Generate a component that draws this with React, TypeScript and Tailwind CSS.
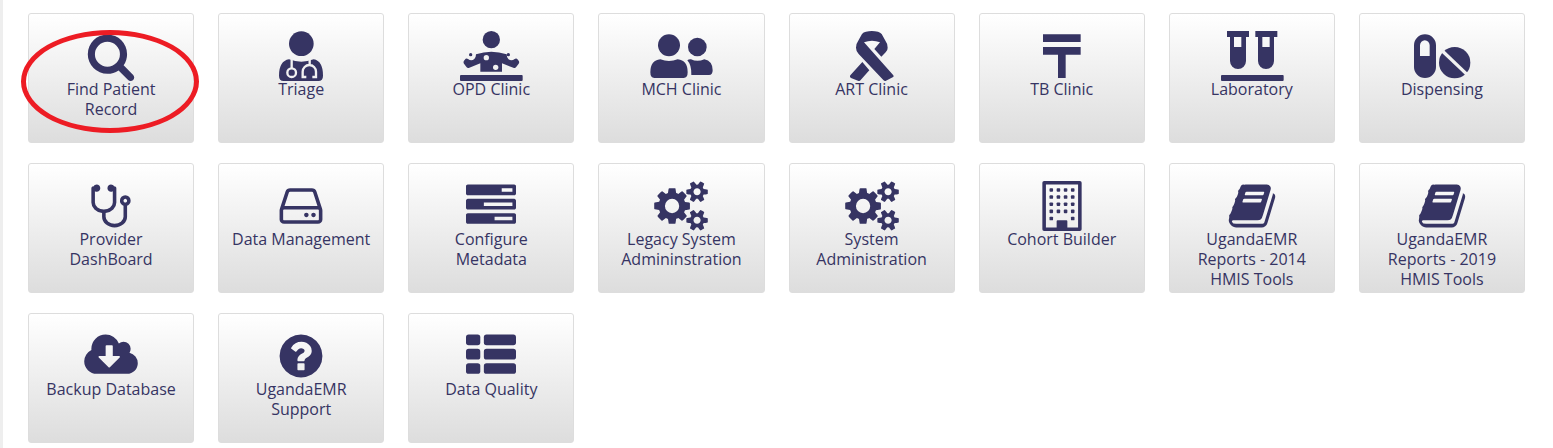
import type { ReactNode } from "react";

const BG = "#f1f1f1";

function Glyph({ d }: { d: string }) {
  return (
    <svg viewBox="-64 0 1920 1792" className="h-[50px] w-[54px] fill-current" aria-hidden="true">
      <path d={d} />
    </svg>
  );
}

function Drawing({ children }: { children: ReactNode }) {
  return (
    <svg viewBox="0 0 192 150" className="h-[50px] w-16 fill-current" aria-hidden="true">
      {children}
    </svg>
  );
}

const SEARCH =
  "M1216 832q0-185-131.500-316.500t-316.500-131.500-316.500 131.500-131.500 316.500 131.500 316.500 316.500 131.500 316.500-131.500 131.500-316.500zm512 832q0 52-38 90t-90 38q-54 0-90-38l-343-342q-179 124-399 124-143 0-273.500-55.500t-225-150-150-225-55.500-273.500 55.500-273.500 150-225 225-150 273.500-55.500 273.500 55.500 225 150 150 225 55.500 273.500q0 220-124 399l343 343q37 37 37 90z";
const STETHOSCOPE =
  "M1472 704q0-26-19-45t-45-19-45 19-19 45 19 45 45 19 45-19 19-45zm128 0q0 62-35.500 111t-92.500 70v395q0 159-131.500 271.500t-316.500 112.500-316.500-112.500-131.500-271.500v-132q-164-20-274-128t-110-252v-512q0-26 19-45t45-19q6 0 16 2 17-30 47-48t65-18q53 0 90.500 37.500t37.500 90.500-37.500 90.500-90.500 37.500q-33 0-64-18v402q0 106 94 181t226 75 226-75 94-181v-402q-31 18-64 18-53 0-90.500-37.500t-37.500-90.500 37.500-90.500 90.500-37.500q35 0 65 18t47 48q10-2 16-2 26 0 45 19t19 45v512q0 144-110 252t-274 128v132q0 106 94 181t226 75 226-75 94-181v-395q-57-21-92.500-70t-35.500-111q0-80 56-136t136-56 136 56 56 136z";
const DRIVE =
  "M1168 1216q0 33-23.500 56.500t-56.500 23.500-56.500-23.500-23.500-56.500 23.500-56.500 56.500-23.500 56.500 23.500 23.500 56.500zm256 0q0 33-23.500 56.500t-56.500 23.500-56.500-23.500-23.500-56.500 23.500-56.500 56.500-23.500 56.500 23.500 23.500 56.500zm112 160v-320q0-13-9.500-22.500t-22.500-9.500h-1216q-13 0-22.500 9.500t-9.500 22.500v320q0 13 9.500 22.500t22.500 9.500h1216q13 0 22.500-9.500t9.500-22.500zm-1230-480h1180l-157-482q-4-13-16-21.500t-26-8.500h-782q-14 0-26 8.500t-16 21.500zm1358 160v320q0 66-47 113t-113 47h-1216q-66 0-113-47t-47-113v-320q0-25 16-75l197-606q17-53 63-86t101-33h782q55 0 101 33t63 86l197 606q16 50 16 75z";
const TASKS =
  "M1024 1408h640v-128h-640v128zm-384-512h1024v-128h-1024v128zm640-512h384v-128h-384v128zm512 832v256q0 26-19 45t-45 19h-1664q-26 0-45-19t-19-45v-256q0-26 19-45t45-19h1664q26 0 45 19t19 45zm0-512v256q0 26-19 45t-45 19h-1664q-26 0-45-19t-19-45v-256q0-26 19-45t45-19h1664q26 0 45 19t19 45zm0-512v256q0 26-19 45t-45 19h-1664q-26 0-45-19t-19-45v-256q0-26 19-45t45-19h1664q26 0 45 19t19 45z";
const COGS =
  "M832 896q0-106-75-181t-181-75-181 75-75 181 75 181 181 75 181-75 75-181zm768 512q0-52-38-90t-90-38-90 38-38 90q0 53 37.500 90.500t90.500 37.500 90.500-37.500 37.500-90.500zm0-1024q0-52-38-90t-90-38-90 38-38 90q0 53 37.500 90.500t90.500 37.500 90.500-37.500 37.500-90.500zm-384 421v185q0 10-7 19.500t-16 10.500l-155 24q-11 35-32 76 34 48 90 115 7 11 7 20 0 12-7 19-23 30-82.500 89.500t-78.500 59.500q-11 0-21-7l-115-90q-37 19-77 31-11 108-23 155-7 24-30 24h-186q-11 0-20-7.500t-10-17.500l-23-153q-34-10-75-31l-118 89q-7 7-20 7-11 0-21-8-144-133-144-160 0-9 7-19 10-14 41-53t47-61q-23-44-35-82l-152-24q-10-1-17-9.500t-7-19.500v-185q0-10 7-19.500t16-10.500l155-24q11-35 32-76-34-48-90-115-7-11-7-20 0-12 7-20 22-30 82-89t79-59q11 0 21 7l115 90q34-18 77-32 11-108 23-154 7-24 30-24h186q11 0 20 7.500t10 17.500l23 153q34 10 75 31l118-89q8-7 20-7 11 0 21 8 144 133 144 160 0 8-7 19-12 16-42 54t-45 60q23 48 34 82l152 23q10 2 17 10.500t7 19.500zm640 533v140q0 16-149 31-12 27-30 52 51 113 51 138 0 4-4 7-122 71-124 71-8 0-46-47t-52-68q-20 2-30 2t-30-2q-14 21-52 68t-46 47q-2 0-124-71-4-3-4-7 0-25 51-138-18-25-30-52-149-15-149-31v-140q0-16 149-31 13-29 30-52-51-113-51-138 0-4 4-7 4-2 35-20t59-34 30-16q8 0 46 46.500t52 67.500q20-2 30-2t30 2q51-71 92-112l6-2q4 0 124 70 4 3 4 7 0 25-51 138 17 23 30 52 149 15 149 31zm0-1024v140q0 16-149 31-12 27-30 52 51 113 51 138 0 4-4 7-122 71-124 71-8 0-46-47t-52-68q-20 2-30 2t-30-2q-14 21-52 68t-46 47q-2 0-124-71-4-3-4-7 0-25 51-138-18-25-30-52-149-15-149-31v-140q0-16 149-31 13-29 30-52-51-113-51-138 0-4 4-7 4-2 35-20t59-34 30-16q8 0 46 46.500t52 67.500q20-2 30-2t30 2q51-71 92-112l6-2q4 0 124 70 4 3 4 7 0 25-51 138 17 23 30 52 149 15 149 31z";
const BOOK =
  "M1703 478q40 57 18 129l-275 906q-19 64-76.500 107.500t-122.500 43.500h-923q-77 0-148.500-53.500t-99.500-131.500q-24-67-2-127 0-4 3-27t4-37q1-8-3-21.500t-3-19.500q2-11 8-21t16.500-23.500 16.500-23.500q23-38 45-91.500t30-91.500q3-10 .5-30t-.5-28q3-11 17-28t17-23q21-36 42-92t25-90q1-9-2.500-32t.5-28q4-13 22-30.500t22-22.500q19-26 42.500-84.500t27.500-96.500q1-8-3-25.500t-2-26.500q2-8 9-18t18-23 17-21q8-12 16.500-30.500t15-35 16-36 19.500-32 26.500-23.500 36-11.500 47.500 5.500l-1 3q38-9 51-9h761q74 0 114 56t18 130l-274 906q-36 119-71.500 153.500t-128.500 34.500h-869q-27 0-38 15-11 16-1 43 24 70 144 70h923q29 0 56-15.500t35-41.500l300-987q7-22 5-57 38 15 59 43zm-1064 2q-4 13 2 22.500t20 9.500h608q13 0 25.500-9.500t16.500-22.500l21-64q4-13-2-22.500t-20-9.500h-608q-13 0-25.500 9.500t-16.500 22.500zm-83 256q-4 13 2 22.500t20 9.500h608q13 0 25.500-9.500t16.500-22.500l21-64q4-13-2-22.500t-20-9.500h-608q-13 0-25.500 9.500t-16.500 22.500z";
const CLOUD =
  "M1216 928q0-14-9-23t-23-9h-224v-352q0-13-9.500-22.500t-22.500-9.500h-192q-13 0-22.500 9.500t-9.500 22.500v352h-224q-13 0-22.500 9.500t-9.500 22.500q0 14 9 23l352 352q9 9 23 9t23-9l351-351q10-12 10-24zm640 224q0 159-112.500 271.500t-271.500 112.500h-1088q-185 0-316.500-131.500t-131.500-316.500q0-130 70-240t188-165q-2-30-2-43 0-212 150-362t362-150q156 0 285.500 87t188.500 231q71-62 166-62 106 0 181 75t75 181q0 76-41 138 130 31 213.500 135.500t83.500 238.500z";
const QUESTION =
  "M1024 1376v-192q0-14-9-23t-23-9h-192q-14 0-23 9t-9 23v192q0 14 9 23t23 9h192q14 0 23-9t9-23zm256-672q0-88-55.500-163t-138.500-116-170-41q-243 0-371 213-15 24 8 42l132 100q7 6 19 6 16 0 25-12 53-68 86-92 34-24 86-24 48 0 85.500 26t37.500 59q0 38-20 61t-68 45q-63 28-115.500 86.500t-52.500 125.500v36q0 14 9 23t23 9h192q14 0 23-9t9-23q0-19 21.500-49.500t54.500-49.500q32-18 49-28.500t46-35 44.500-48 28-60.500 12.500-81zm384 192q0 209-103 385.500t-279.500 279.500-385.500 103-385.500-103-279.500-279.500-103-385.500 103-385.500 279.500-279.500 385.500-103 385.500 103 279.500 279.500 103 385.500z";

function DoctorIcon() {
  return (
    <Drawing>
      <circle cx="97" cy="38" r="37" />
      <path d="M60 85Q97 99 134 85Q162 90 162 134Q162 150 148 150H44Q30 150 30 134Q30 90 60 85Z" />
      <g fill="none" stroke={BG} strokeWidth="7">
        <path d="M68 82V112" />
        <circle cx="68" cy="125" r="13" />
        <path d="M122 82V104M112 138H101V122A20 20 0 0 1 141 122V138H130" />
      </g>
    </Drawing>
  );
}

function OutpatientIcon() {
  return (
    <Drawing>
      <circle cx="97" cy="26" r="26" />
      <path d="M15 89L20 83Q24 81 27 84Q37 92 46 84Q51 80 51 70Q97 54 143 70Q143 80 148 84Q157 92 167 84Q170 81 174 83L179 89Q182 94 179 98L171 109Q168 112 163 110L129 97V122H64V97L31 110Q26 112 23 109L15 98Q12 94 15 89Z" />
      <circle cx="35" cy="71" r="5" />
      <circle cx="148" cy="71" r="5" />
      <circle cx="82" cy="80" r="8" fill={BG} />
      <circle cx="110" cy="109" r="8" fill={BG} />
      <rect x="3" y="132" width="188" height="18" rx="3" />
    </Drawing>
  );
}

function PeopleIcon() {
  return (
    <Drawing>
      <circle cx="60" cy="43" r="33" />
      <path d="M34 85Q60 95 86 85Q116 88 116 124Q116 141 104 141H16Q4 141 4 124Q4 88 34 85Z" />
      <circle cx="145" cy="48" r="28" />
      <path d="M115 88Q120 84 126 85Q145 94 166 85Q191 90 191 118Q191 132 180 132H127Q128 102 115 88Z" />
    </Drawing>
  );
}

function RibbonIcon() {
  return (
    <Drawing>
      <path d="M48 50Q48 38 56 27L66 9Q70 3 78 2Q95 -2 114 2Q121 4 125 9L135 27Q143 38 143 50Q143 59 137 64L124 77L103 54L120 34Q96 24 72 34L160 133Q162 137 158 139L138 149Q134 151 130 147L56 69Q48 61 48 50Z" />
      <path d="M67 93L88 118L62 147Q59 151 54 149L33 141Q28 138 31 133Z" />
    </Drawing>
  );
}

function TbIcon() {
  return (
    <Drawing>
      <path d="M39 10H152V33H39ZM39 48H152V71H107V141H84V71H39Z" />
    </Drawing>
  );
}

function TubesIcon() {
  return (
    <Drawing>
      <path
        fillRule="evenodd"
        d="M21 0H87V18H78V90A24 24 0 0 1 30 90V18H21ZM42 18V48H64V18ZM106 0H172V18H162V90A24 24 0 0 1 114 90V18H106ZM127 18V48H149V18Z"
      />
      <rect x="3" y="132" width="188" height="18" rx="3" />
    </Drawing>
  );
}

function PillsIcon() {
  return (
    <Drawing>
      <path
        fillRule="evenodd"
        d="M12 43A33 33 0 0 1 78 43V108A33 33 0 0 1 12 108ZM30 75H59V43A14 15 0 0 0 30 43Z"
      />
      <circle cx="134" cy="95" r="47" />
      <path d="M94 57L174 133" stroke={BG} strokeWidth="10" />
    </Drawing>
  );
}

function BuildingIcon() {
  const windows = [256, 512, 768, 1024, 1280].flatMap((y) =>
    [448, 704, 960, 1216]
      .filter((x) => y < 1280 || x === 448 || x === 1216)
      .map((x) => ({ x, y })),
  );
  return (
    <svg viewBox="-64 0 1920 1792" className="h-[50px] w-[54px] fill-current" aria-hidden="true">
      <path
        fillRule="evenodd"
        d="M256 0H1536Q1600 0 1600 64V1728Q1600 1792 1536 1792H256Q192 1792 192 1728V64Q192 0 256 0ZM320 128V1664H704V1440Q704 1408 736 1408H1056Q1088 1408 1088 1440V1664H1472V128Z"
      />
      {windows.map(({ x, y }) => (
        <rect key={`${x}-${y}`} x={x} y={y} width="128" height="128" rx="32" />
      ))}
    </svg>
  );
}

function ListIcon() {
  return (
    <svg viewBox="-64 0 1920 1792" className="h-[50px] w-[54px] fill-current" aria-hidden="true">
      {[128, 640, 1152].map((y) => (
        <g key={y}>
          <rect x="0" y={y} width="512" height="384" rx="96" />
          <rect x="640" y={y} width="1152" height="384" rx="96" />
        </g>
      ))}
    </svg>
  );
}

const apps: { label: string; icon: ReactNode; marked?: boolean }[] = [
  { label: "Find Patient Record", icon: <Glyph d={SEARCH} />, marked: true },
  { label: "Triage", icon: <DoctorIcon /> },
  { label: "OPD Clinic", icon: <OutpatientIcon /> },
  { label: "MCH Clinic", icon: <PeopleIcon /> },
  { label: "ART Clinic", icon: <RibbonIcon /> },
  { label: "TB Clinic", icon: <TbIcon /> },
  { label: "Laboratory", icon: <TubesIcon /> },
  { label: "Dispensing", icon: <PillsIcon /> },
  { label: "Provider DashBoard", icon: <Glyph d={STETHOSCOPE} /> },
  { label: "Data Management", icon: <Glyph d={DRIVE} /> },
  { label: "Configure Metadata", icon: <Glyph d={TASKS} /> },
  { label: "Legacy System Admininstration", icon: <Glyph d={COGS} /> },
  { label: "System Administration", icon: <Glyph d={COGS} /> },
  { label: "Cohort Builder", icon: <BuildingIcon /> },
  { label: "UgandaEMR Reports - 2014 HMIS Tools", icon: <Glyph d={BOOK} /> },
  { label: "UgandaEMR Reports - 2019 HMIS Tools", icon: <Glyph d={BOOK} /> },
  { label: "Backup Database", icon: <Glyph d={CLOUD} /> },
  { label: "UgandaEMR Support", icon: <Glyph d={QUESTION} /> },
  { label: "Data Quality", icon: <ListIcon /> },
];

export default function App() {
  return (
    <main className="min-h-screen border-l-[3px] border-[#eeeeee] bg-white pt-[13px] pr-7 pb-[5px] pl-[25px] font-['Open_Sans',sans-serif]">
      <nav
        aria-label="Applications"
        className="grid grid-cols-[repeat(auto-fill,minmax(150px,1fr))] gap-x-6 gap-y-5"
      >
        {apps.map(({ label, icon, marked }) => (
          <a
            key={label}
            href="#"
            className="relative flex min-h-[130px] flex-col items-center rounded-[3px] border border-[#dddddd] bg-linear-to-b from-white to-[#dddddd] px-2.5 pt-[17px] text-center text-base leading-5 font-normal text-[#363463]"
          >
            <span className="flex h-12 justify-center">{icon}</span>
            <span>{label}</span>
            {marked && (
              <span className="pointer-events-none absolute top-[16px] right-[-6px] bottom-[9px] left-[-8px] rounded-[50%] border-5 border-[#ed1c24]" />
            )}
          </a>
        ))}
      </nav>
    </main>
  );
}
